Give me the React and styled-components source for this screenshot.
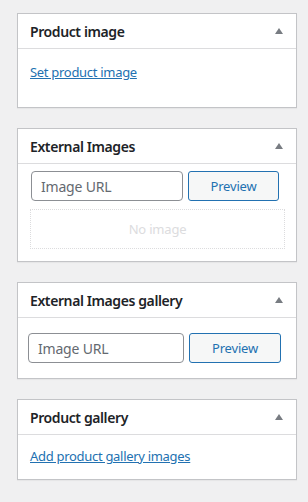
import React from "react";
import styled, {createGlobalStyle} from "styled-components";

const GlobalStyle = createGlobalStyle`
  html, body {
    margin: 0;
    padding: 0;
    background: #f0f0f1;
  }
  body {
    font-family: "Noto Sans", "Open Sans", sans-serif;
    color: #3c434a;
    font-size: 13px;
  }
`;

const Sidebar = styled.div`
  display: flex;
  flex-direction: column;
  gap: 20px;
  width: 280px;
  padding: 13px 11px 20px 17px;
`;

const Postbox = styled.div`
  background: #fff;
  border: 1px solid #c3c4c7;
  box-shadow: 0 1px 1px rgba(0, 0, 0, 0.04);
`;

const Header = styled.div`
  display: flex;
  align-items: center;
  justify-content: space-between;
  height: 34px;
  padding: 0 12px;
  border-bottom: 1px solid #dcdcde;
`;

const Title = styled.h2`
  margin: 0;
  font-size: 14px;
  font-weight: 600;
  color: #1d2327;
  letter-spacing: -0.4px;
`;

const Toggle = styled.svg`
  width: 8px;
  height: 6px;
  margin-right: 1px;
  fill: #787c82;
`;

const Inside = styled.div`
  padding: ${p => p.$pad || "12px"};
  display: flex;
  flex-direction: column;
  gap: 8px;
`;

const Link = styled.a`
  color: #2271b1;
  text-decoration: underline;
  font-size: 13px;
  line-height: 19px;
  letter-spacing: -0.3px;
  cursor: pointer;
`;

const Row = styled.div`
  display: flex;
  gap: 5px;
  padding-left: ${p => p.$indent || 0}px;
`;

const UrlInput = styled.input`
  box-sizing: border-box;
  width: ${p => p.$w}px;
  min-width: 0;
  flex: none;
  height: 30px;
  padding: 0 9px;
  border: 1px solid #8c8f94;
  border-radius: 4px;
  font-family: inherit;
  font-size: 14px;
  letter-spacing: -0.2px;
  color: #2c3338;
  background: #fff;
  &::placeholder {
    color: #646970;
  }
`;

const PreviewButton = styled.button`
  box-sizing: border-box;
  width: ${p => p.$w}px;
  flex: none;
  height: 30px;
  padding: 0;
  border: 1px solid #2271b1;
  border-radius: 3px;
  background: #f6f7f7;
  color: #2271b1;
  font-family: inherit;
  font-size: 13px;
  letter-spacing: -0.2px;
  cursor: pointer;
`;

const NoImage = styled.div`
  height: 38px;
  border: 1px dotted #dcdcde;
  display: flex;
  align-items: center;
  justify-content: center;
  color: #dcdcde;
  font-size: 13px;
  letter-spacing: -0.2px;
`;

const Box = ({title, children}) => (
  <Postbox>
    <Header>
      <Title>{title}</Title>
      <Toggle viewBox="0 0 8 6">
        <polygon points="4,0 8,6 0,6"/>
      </Toggle>
    </Header>
    {children}
  </Postbox>
);

export default function App() {
  return (
    <>
      <GlobalStyle/>
      <Sidebar>
        <Box title="Product image">
          <Inside $pad="14px 12px 25px">
            <Link>Set product image</Link>
          </Inside>
        </Box>
        <Box title="External Images">
          <Inside $pad="7px 11px 12px 12px">
            <Row $indent={1}>
              <UrlInput $w={152} placeholder="Image URL"/>
              <PreviewButton $w={91}>Preview</PreviewButton>
            </Row>
            <NoImage>No image</NoImage>
          </Inside>
        </Box>
        <Box title="External Images gallery">
          <Inside $pad="15px 12px 15px 10px">
            <Row>
              <UrlInput $w={156} placeholder="Image URL"/>
              <PreviewButton $w={92}>Preview</PreviewButton>
            </Row>
          </Inside>
        </Box>
        <Box title="Product gallery">
          <Inside $pad="12px 12px 13px">
            <Link>Add product gallery images</Link>
          </Inside>
        </Box>
      </Sidebar>
    </>
  );
}
